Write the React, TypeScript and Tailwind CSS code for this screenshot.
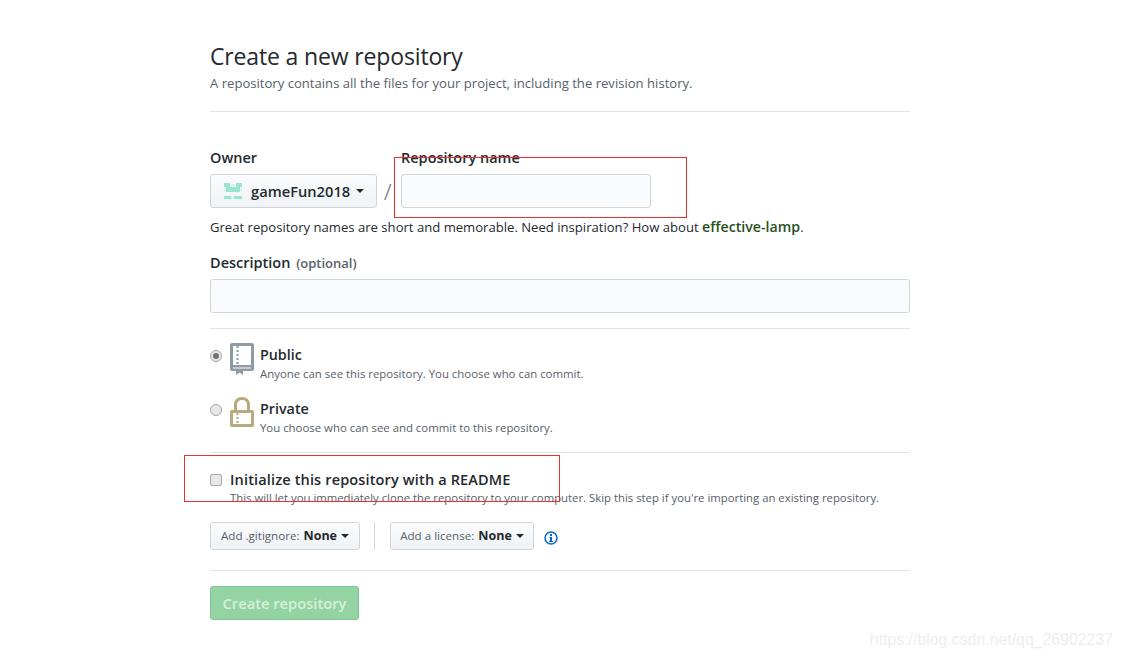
import React from 'react';

const Caret = () => (
  <span className="inline-block w-0 h-0 border-x-[4px] border-x-transparent border-t-[4px] border-t-[#24292e]"></span>
);

const RepoIcon = () => (
  <svg className="block" width="24" height="32" viewBox="0 0 24 32">
    <path fill="#8f9aa5" fillRule="evenodd" d="M2 0h20a2 2 0 0 1 2 2v24a2 2 0 0 1-2 2H2a2 2 0 0 1-2-2V2a2 2 0 0 1 2-2zm1 3v19h18V3H3zm0 21.500v1h18v-1H3z" />
    <path fill="#8f9aa5" d="M6.500 3h2v2h-2zM6.500 7h2v2h-2zM6.500 11h2v2h-2zM6.500 15h2v2h-2zM6.500 19h2v2h-2zM6 26h7v6l-3.500-2.500L6 32z" />
  </svg>
);

const LockIcon = () => (
  <svg className="block" width="24" height="30" viewBox="0 0 24 30">
    <path fill="#b8aa7c" fillRule="evenodd" d="M12 0c4.600 0 8 3 8 7.500V13h2a2 2 0 0 1 2 2v13a2 2 0 0 1-2 2H2a2 2 0 0 1-2-2V15a2 2 0 0 1 2-2h2V7.500C4 3 7.400 0 12 0zm0 3c-3 0-5 1.800-5 4.500V13h10V7.500C17 4.800 15 3 12 3zM3 16v11h18V16H3z" />
    <path fill="#b8aa7c" d="M6.500 16h2v2h-2zM6.500 20h2v2h-2zM6.500 24h2v2h-2z" />
  </svg>
);

const Avatar = () => (
  <svg className="block" width="20" height="20" viewBox="0 0 20 20">
    <path fill="#98e6d0" d="M1 2h6v4H1zM13 2h6v4h-6zM3 6h14v5H3zM1 15h7.500v3H1zM11 15h8v3h-8z" />
    <path fill="#d8f6ed" d="M8 3h4v2H8zM1 7h2v3H1zM17 7h2v3h-2z" />
  </svg>
);

export default function App() {
  return (
    <div className="relative w-[1122px] h-[658px] overflow-hidden bg-white font-['Open_Sans','Noto_Sans',sans-serif] text-[#24292e]">
      <div className="ml-[210px] w-[700px] pt-[41px]">
        <h1 className="text-[23px] leading-[30px] font-normal tracking-[-0.15px]">Create a new repository</h1>
        <p className="mt-[2px] text-[13.1px] leading-[20px] text-[#586069]">
          A repository contains all the files for your project, including the revision history.
        </p>
        <hr className="mt-[18px] border-[#e1e4e8]" />

        <div className="mt-[36px] flex items-end">
          <div>
            <div className="text-[14.5px] leading-[20px] font-semibold">Owner</div>
            <button className="mt-[6px] w-[167px] h-[34px] flex items-center pl-[12px] gap-[8px] border border-[#d1d5da] rounded-[3px] bg-gradient-to-b from-[#fafbfc] to-[#eff3f6] text-[14.7px] font-semibold">
              <Avatar />
              <span>gameFun2018</span>
              <span className="-ml-[2px] flex"><Caret /></span>
            </button>
          </div>
          <span className="w-[24px] pl-[7px] text-[22px] leading-[34px] font-light text-[#586069]">/</span>
          <div>
            <div className="text-[14.5px] leading-[20px] font-semibold">Repository name</div>
            <input className="block mt-[6px] w-[250px] h-[34px] border border-[#d1d5da] rounded-[3px] bg-[#fafbfc]" />
          </div>
        </div>

        <p className="mt-[9px] text-[13.1px] leading-[20px] text-[#24292e]">
          Great repository names are short and memorable. Need inspiration? How about{' '}
          <span className="text-[14.2px] font-semibold text-[#28501c]">effective-lamp</span>.
        </p>

        <div className="mt-[16px] text-[14.5px] leading-[20px] font-semibold">
          Description <span className="ml-[2px] text-[13px] text-[#586069]">(optional)</span>
        </div>
        <input className="block mt-[6px] w-[700px] h-[34px] border border-[#d1d5da] rounded-[3px] bg-[#fafbfc]" />
        <hr className="mt-[15px] border-[#e1e4e8]" />

        <div className="mt-[15px] flex items-start h-[40px]">
          <span className="mt-[6px] w-[12px] h-[12px] rounded-full border border-[#a8a8a8] bg-[#e8e8e8] flex items-center justify-center">
            <span className="w-[6px] h-[6px] rounded-full bg-[#707070]"></span>
          </span>
          <span className="ml-[8px] -mt-[1px]"><RepoIcon /></span>
          <div className="ml-[6px]">
            <div className="text-[14.3px] leading-[20px] font-semibold mt-[1px]">Public</div>
            <div className="text-[11.4px] leading-[17px] text-[#586069]">Anyone can see this repository. You choose who can commit.</div>
          </div>
        </div>

        <div className="mt-[14px] flex items-start h-[40px]">
          <span className="mt-[6px] w-[12px] h-[12px] rounded-full border border-[#a8a8a8] bg-[#e8e8e8]"></span>
          <span className="ml-[8px] -mt-[1px]"><LockIcon /></span>
          <div className="ml-[6px]">
            <div className="text-[14.3px] leading-[20px] font-semibold mt-[1px]">Private</div>
            <div className="text-[11.4px] leading-[17px] text-[#586069]">You choose who can see and commit to this repository.</div>
          </div>
        </div>

        <hr className="mt-[14px] border-[#e1e4e8]" />

        <div className="mt-[17px] flex items-center h-[20px]">
          <span className="w-[12px] h-[12px] rounded-[2px] border border-[#a8a8a8] bg-[#e8e8e8]"></span>
          <span className="ml-[8px] text-[14.5px] leading-[20px] font-semibold tracking-[0.15px]">Initialize this repository with a README</span>
        </div>
        <p className="ml-[20px] -mt-[1px] text-[11.35px] leading-[18px] text-[#586069]">
          This will let you immediately clone the repository to your computer. Skip this step if you're importing an existing repository.
        </p>

        <div className="mt-[15px] flex items-center">
          <button className="w-[150px] h-[28px] flex items-center justify-center gap-[4px] border border-[#d1d5da] rounded-[3px] bg-gradient-to-b from-[#fafbfc] to-[#eff3f6] text-[11.6px]">
            <span className="text-[#586069]">Add .gitignore:</span>
            <span className="font-bold text-[12.5px]">None</span>
            <Caret />
          </button>
          <span className="ml-[14px] w-px h-[28px] bg-[#d1d5da]"></span>
          <button className="ml-[15px] w-[144px] h-[28px] flex items-center justify-center gap-[4px] border border-[#d1d5da] rounded-[3px] bg-gradient-to-b from-[#fafbfc] to-[#eff3f6] text-[11.6px]">
            <span className="text-[#586069]">Add a license:</span>
            <span className="font-bold text-[12.5px]">None</span>
            <Caret />
          </button>
          <svg className="ml-[10px] mt-[3px]" width="14" height="14" viewBox="0 0 14 14">
            <circle cx="7" cy="7" r="6" fill="none" stroke="#0366d6" strokeWidth="1.500" />
            <path fill="#0366d6" d="M6 3h2v2H6zM5.500 6H8v4h1v1H5v-1h1V7h-.5z" />
          </svg>
        </div>

        <hr className="mt-[20px] border-[#e1e4e8]" />

        <button className="mt-[15px] w-[149px] h-[34px] rounded-[3px] border border-[#7fc794] bg-[#94d3a2] text-[14.7px] font-semibold text-[#d7efdc]">
          Create repository
        </button>
      </div>

      {/* annotations drawn over the page */}
      <div className="absolute left-[394px] top-[157px] w-[293px] h-[61px] border border-[#e5332f]"></div>
      <div className="absolute left-[184px] top-[455px] w-[376px] h-[47px] border border-[#e5332f]"></div>
      <div className="absolute right-[9px] top-[630px] font-['Liberation_Sans',sans-serif] text-[15.85px] leading-[20px] text-[#eeeeee]">https://blog.csdn.net/qq_26902237</div>
    </div>
  );
}
